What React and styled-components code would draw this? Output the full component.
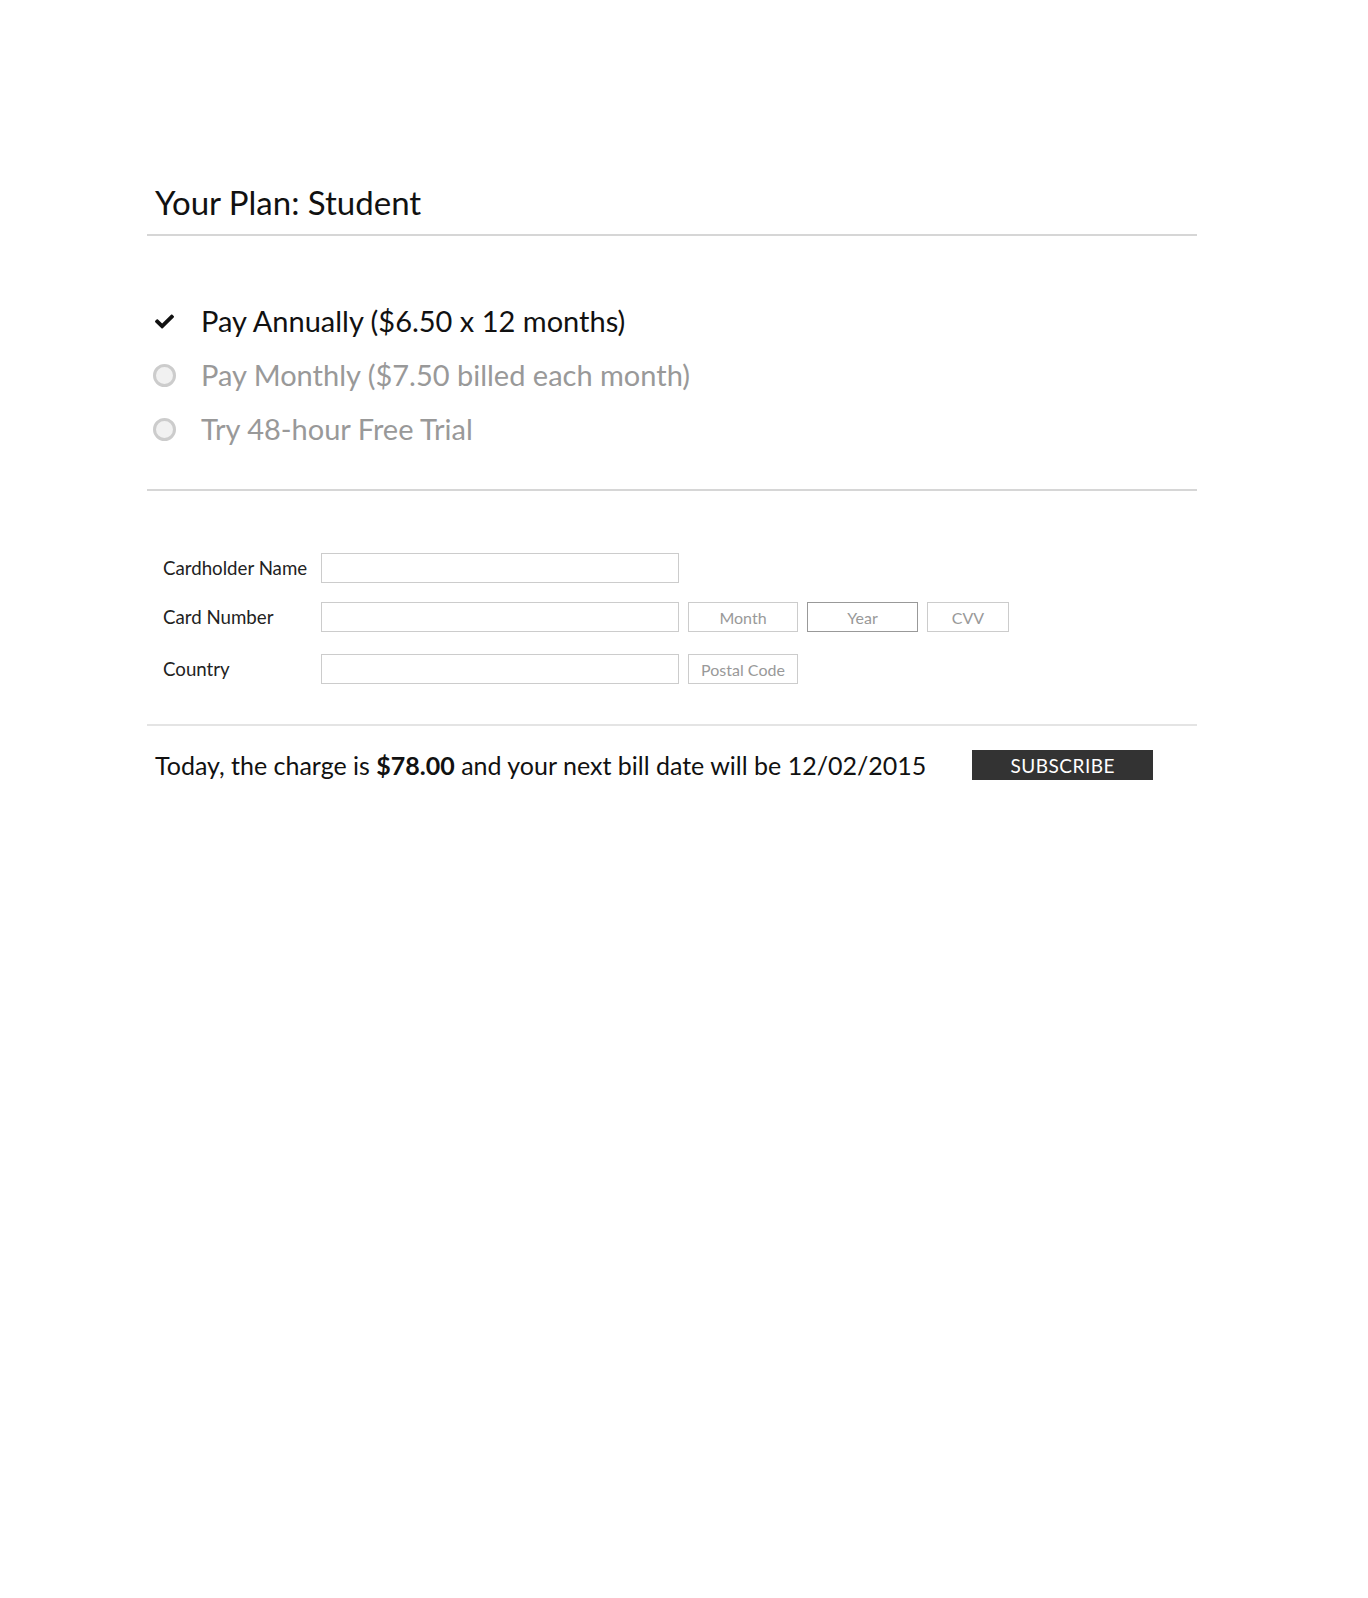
import React from 'react';
import styled, { createGlobalStyle } from 'styled-components';
import { FaCheck } from 'react-icons/fa';

const GlobalStyle = createGlobalStyle`
    body {
        margin: 0;
        background: #fff;
        font-family: Lato, "Noto Sans", sans-serif;
        color: #111;
    }
`

const Page = styled.div`
    width: 1050px;
    margin-left: 147px;
    padding-top: 180px;
`

const Title = styled.h1`
    font-size: 33px;
    font-weight: 400;
    margin: 0;
    padding: 0 8px 10px;
    line-height: 44px;
    border-bottom: 2px solid #d6d6d6;
`

const Options = styled.ul`
    list-style: none;
    margin: 0;
    padding: 66px 0 41px 6px;
    border-bottom: 2px solid #d6d6d6;
    display: flex;
    flex-direction: column;
    gap: 16px;
`

const Option = styled.li`
    display: flex;
    align-items: center;
    gap: 26px;
    font-size: 29px;
    line-height: 38px;
    color: ${p => (p.$active ? '#111' : '#999')};
`

const Mark = styled.span`
    width: 22px;
    height: 22px;
    display: flex;
    align-items: center;
    justify-content: center;
    color: #111;
`

const Radio = styled.span`
    width: 17px;
    height: 17px;
    flex: none;
    border: 3px solid #ccc;
    background: #f1f1f1;
    border-radius: 50%;
`

const Form = styled.div`
    padding: 62px 0 40px 16px;
    border-bottom: 2px solid #e4e4e4;
    display: flex;
    flex-direction: column;
    gap: 19px;
`

const Row = styled.div`
    display: flex;
    align-items: center;
    gap: 9px;
    margin-top: ${p => p.$offset || 0}px;
`

const Label = styled.label`
    width: 149px;
    flex: none;
    font-size: 18.7px;
    color: #222;
`

const Field = styled.div`
    width: ${p => p.$w}px;
    height: 28px;
    border: 1px solid ${p => (p.$dark ? '#999' : '#ccc')};
    box-sizing: content-box;
    display: flex;
    align-items: center;
    justify-content: center;
    font-size: 16px;
    color: #999;
`

const Footer = styled.div`
    display: flex;
    align-items: center;
    padding: 24px 8px;
`

const Summary = styled.p`
    margin: 0;
    font-size: 25px;
    color: #111;
    strong {
        font-weight: 700;
    }
`

const Subscribe = styled.button`
    margin-left: 46px;
    width: 181px;
    height: 30px;
    background: #333;
    color: #fff;
    border: none;
    font-family: inherit;
    font-size: 19px;
    letter-spacing: 0.5px;
    padding: 0;
`

const App = () => {
    return (
        <Page>
            <GlobalStyle />
            <Title>Your Plan: Student</Title>
            <Options>
                <Option $active>
                    <Mark><FaCheck size={19} /></Mark>
                    Pay Annually ($6.50 x 12 months)
                </Option>
                <Option>
                    <Mark><Radio /></Mark>
                    Pay Monthly ($7.50 billed each month)
                </Option>
                <Option>
                    <Mark><Radio /></Mark>
                    Try 48-hour Free Trial
                </Option>
            </Options>
            <Form>
                <Row>
                    <Label>Cardholder Name</Label>
                    <Field $w={356} />
                </Row>
                <Row>
                    <Label>Card Number</Label>
                    <Field $w={356} />
                    <Field $w={108}>Month</Field>
                    <Field $w={109} $dark>Year</Field>
                    <Field $w={80}>CVV</Field>
                </Row>
                <Row $offset={3}>
                    <Label>Country</Label>
                    <Field $w={356} />
                    <Field $w={108}>Postal Code</Field>
                </Row>
            </Form>
            <Footer>
                <Summary>
                    Today, the charge is <strong>$78.00</strong> and your next bill date will be 12/02/2015
                </Summary>
                <Subscribe>SUBSCRIBE</Subscribe>
            </Footer>
        </Page>
    )
}

export default App;
